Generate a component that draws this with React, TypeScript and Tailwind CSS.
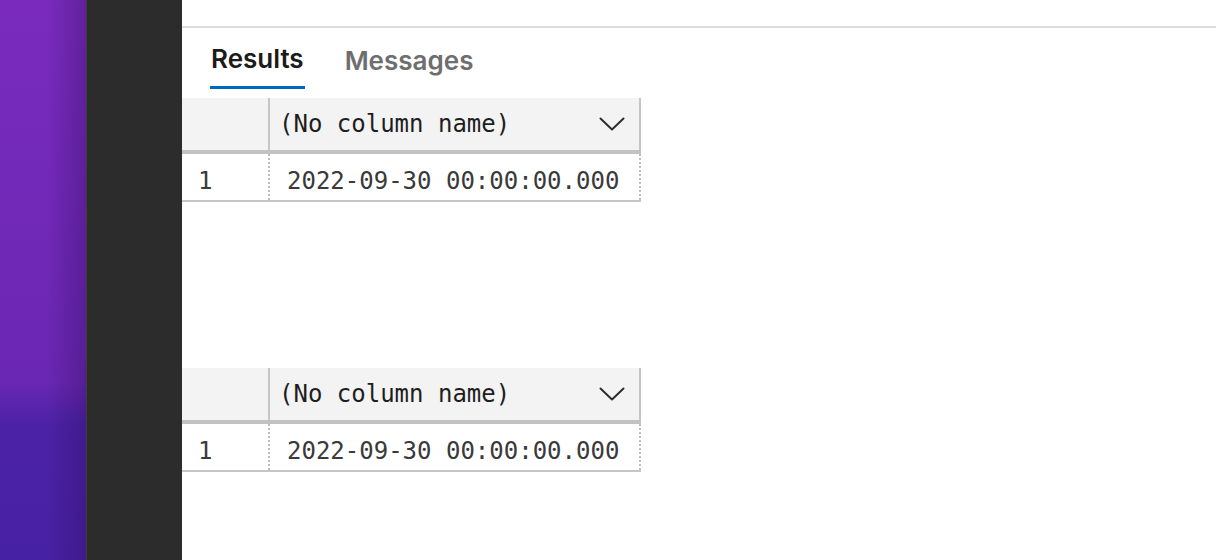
const mono = "font-['DejaVu_Sans_Mono','Liberation_Mono',monospace]";

function Chevron() {
  return (
    <svg width="26" height="14" viewBox="0 0 26 14" fill="none" className="text-[#2e2e2e]">
      <path d="M1.5 1.5 13 12.5 24.5 1.5" stroke="currentColor" strokeWidth="2" strokeLinecap="round" strokeLinejoin="round" />
    </svg>
  );
}

function ResultGrid() {
  return (
    <div className={`w-[459px] ${mono} text-[24px] text-[#1e1e1e]`}>
      <div className="flex h-[56px] border-b-[4px] border-[#c2c2c2] bg-[#f3f3f3]">
        <div className="w-[88px] shrink-0 border-r-2 border-[#c6c6c6]" />
        <div className="flex flex-1 items-center justify-between border-r-2 border-[#c6c6c6] pl-[9px] pr-[14px]">
          <span className="leading-none">(No column name)</span>
          <Chevron />
        </div>
      </div>
      <div className="flex h-[48px] border-b-2 border-[#c6c6c6] text-[#3a3a3a]">
        <div className="flex w-[88px] shrink-0 items-center border-r-2 border-dotted border-[#bdbdbd] pl-[16px] pt-[8px]">
          <span className="leading-none">1</span>
        </div>
        <div className="flex flex-1 items-center border-r-2 border-dotted border-[#bdbdbd] pl-[17px] pt-[8px]">
          <span className="leading-none">2022-09-30 00:00:00.000</span>
        </div>
      </div>
    </div>
  );
}

export default function App() {
  return (
    <div className="flex h-[560px] w-[1216px] overflow-hidden bg-white">
      <div className="w-[86px] shrink-0 bg-[linear-gradient(180deg,#7a2bbd_0%,#6f28b6_45%,#6a27b2_68%,#4b22a6_76%,#4721a3_100%)]">
        <div className="h-full w-full bg-[linear-gradient(90deg,transparent_55%,rgba(40,10,80,0.3)_100%)]" />
      </div>
      <div className="w-px shrink-0 bg-[#3e3d36]" />
      <div className="w-[95px] shrink-0 bg-[#2c2c2c]" />
      <div className="flex flex-1 flex-col">
        <div className="h-[28px] shrink-0 border-b-2 border-[#dcdcdc]" />
        <div className="flex gap-[40px] pl-[28px] pt-[18px] font-['Inter','Noto_Sans',sans-serif] text-[26px] font-semibold leading-none">
          <div className="flex flex-col">
            <span className="px-[1px] text-[#1b1b1b]">Results</span>
            <div className="mt-[14px] h-[3px] bg-[#0067c0]" />
          </div>
          <span className="pt-[2px] text-[#6e6e6e]">Messages</span>
        </div>
        <div className="mt-[9px]">
          <ResultGrid />
        </div>
        <div className="mt-[166px]">
          <ResultGrid />
        </div>
      </div>
    </div>
  );
}
